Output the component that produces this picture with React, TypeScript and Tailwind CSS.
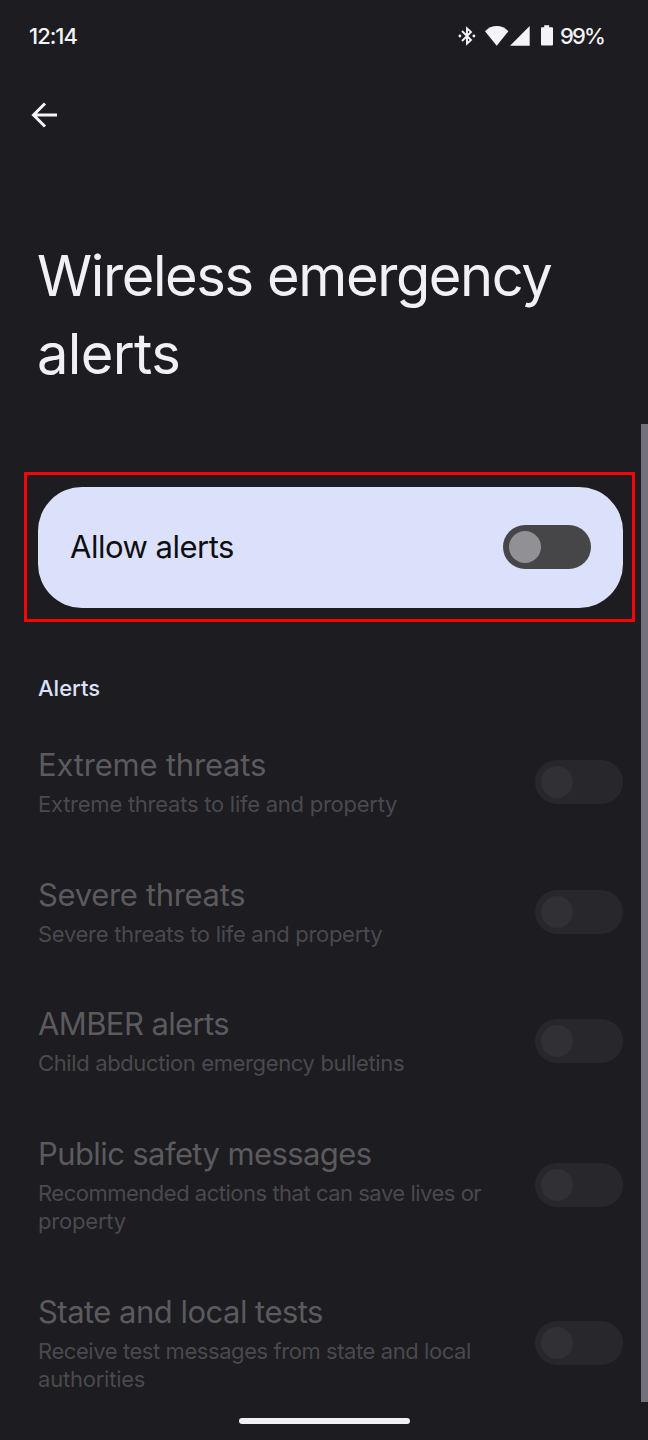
type AlertItem = {
  title: string;
  titleClass: string;
  lines: { text: string; className: string }[];
};

const items: AlertItem[] = [
  {
    title: 'Extreme threats',
    titleClass: 'tracking-[-0.2px]',
    lines: [{ text: 'Extreme threats to life and property', className: 'tracking-[-0.25px]' }],
  },
  {
    title: 'Severe threats',
    titleClass: 'tracking-[-0.33px]',
    lines: [{ text: 'Severe threats to life and property', className: 'tracking-[-0.29px]' }],
  },
  {
    title: 'AMBER alerts',
    titleClass: 'tracking-[-0.6px]',
    lines: [{ text: 'Child abduction emergency bulletins', className: 'tracking-[-0.37px]' }],
  },
  {
    title: 'Public safety messages',
    titleClass: 'tracking-[-0.6px]',
    lines: [
      { text: 'Recommended actions that can save lives or', className: 'tracking-[-0.49px]' },
      { text: 'property', className: 'tracking-[-0.2px]' },
    ],
  },
  {
    title: 'State and local tests',
    titleClass: 'tracking-[-0.52px]',
    lines: [
      { text: 'Receive test messages from state and local', className: 'tracking-[-0.43px]' },
      { text: 'authorities', className: 'tracking-[-0.22px]' },
    ],
  },
];

function StatusBar() {
  return (
    <header className="flex h-[71px] items-center pl-[29px] text-[#f4f3f8]">
      <span className="w-[429px] text-[22px] font-medium leading-none tracking-[-1px]">12:14</span>
      <div className="flex items-center">
        <svg className="h-[20px] w-[18px]" viewBox="0 0 18 20" fill="none" stroke="currentColor" strokeWidth="1.9">
          <path d="M4 5 13 14 9 17.600V2.400L13 6 4 15" />
          <circle cx="1.9" cy="10" r="1.400" fill="currentColor" stroke="none" />
          <circle cx="15.900" cy="10" r="1.400" fill="currentColor" stroke="none" />
        </svg>
        <svg className="ml-[9px] h-[20px] w-[24px]" viewBox="0 0 24 20" fill="currentColor">
          <path d="M11.700 19.800 0 5.200C3.200 1.800 7.200 0 11.700 0s8.500 1.800 11.700 5.200Z" />
        </svg>
        <svg className="h-[20px] w-[21px]" viewBox="0 0 21 20" fill="currentColor">
          <path d="M20.700 0V19.700H1Z" />
        </svg>
        <svg className="ml-[10px] h-[21px] w-[14px]" viewBox="0 0 14 21" fill="currentColor">
          <path d="M4.200 0.300h5V2.300H12q1 0 1 1V19.500q0 1-1 1H2q-1 0-1-1V3.300q0-1 1-1H4.200Z" />
        </svg>
        <span className="ml-[6px] text-[22px] font-medium leading-none tracking-[-1.8px]">99%</span>
      </div>
    </header>
  );
}

function Toggle({ disabled = false }: { disabled?: boolean }) {
  return (
    <span
      role="switch"
      aria-checked="false"
      className={`flex h-[44px] w-[88px] shrink-0 items-center rounded-full pl-[6px] ${
        disabled ? 'bg-[#28272b]' : 'bg-[#464649]'
      }`}
    >
      <span className={`size-[32px] rounded-full ${disabled ? 'bg-[#313034]' : 'bg-[#919094]'}`} />
    </span>
  );
}

function AlertRow({ item }: { item: AlertItem }) {
  return (
    <li className="flex items-center justify-between pl-[38px] pr-[25px]">
      <div className="pt-[25.5px] pb-[28.6px]">
        <h3 className="mb-[3px] whitespace-nowrap text-[31px] leading-[44px] text-[#5b5a5e]">
          <span className={item.titleClass}>{item.title}</span>
        </h3>
        <p className="text-[22px] leading-[28.5px] text-[#4a494e]">
          {item.lines.map((line) => (
            <span key={line.text} className="block whitespace-nowrap">
              <span className={line.className}>{line.text}</span>
            </span>
          ))}
        </p>
      </div>
      <Toggle disabled />
    </li>
  );
}

export default function App() {
  return (
    <div className="relative flex h-[1440px] w-[648px] flex-col overflow-hidden bg-[#1d1c20] font-['Inter',sans-serif]">
      <StatusBar />
      <div className="flex h-[87px] items-center pl-[31px]">
        <svg className="h-[26px] w-[27px]" viewBox="0 0 27 26" fill="none" stroke="#f4f3f8" strokeWidth="3">
          <path d="M26 13H3M14 1.500 2.500 13 14 24.500" />
        </svg>
      </div>
      <h1 className="mt-[79px] pl-[37px] text-[56px] leading-[78px] text-[#f1f0f6]">
        <span className="tracking-[-1.4px]">Wireless emergency</span>
        <br />
        <span className="tracking-[-0.65px]">alerts</span>
      </h1>
      <section className="ml-[24px] mt-[79px] h-[150px] w-[611px] border-[3px] border-[#fb0000] px-[11px] py-[11.500px]">
        <div className="flex h-[121.5px] w-[585px] items-center justify-between rounded-[44px] bg-[#dce1fb] px-[32px]">
          <span className="text-[31px] tracking-[-0.5px] text-[#0e0e12]">Allow alerts</span>
          <Toggle />
        </div>
      </section>
      <h2 className="mt-[50.5px] h-[45px] pl-[38px] text-[22px] font-medium leading-[30px] text-[#dce1fb]">
        <span>Alerts</span>
      </h2>
      <ul>
        {items.map((item) => (
          <AlertRow key={item.title} item={item} />
        ))}
      </ul>
      <div className="absolute right-0 top-[423.5px] h-[978.5px] w-[7px] bg-[#73727b]" />
      <div className="absolute bottom-[16px] left-[239px] h-[6.5px] w-[170.5px] rounded-full bg-[#f1eff4]" />
    </div>
  );
}
